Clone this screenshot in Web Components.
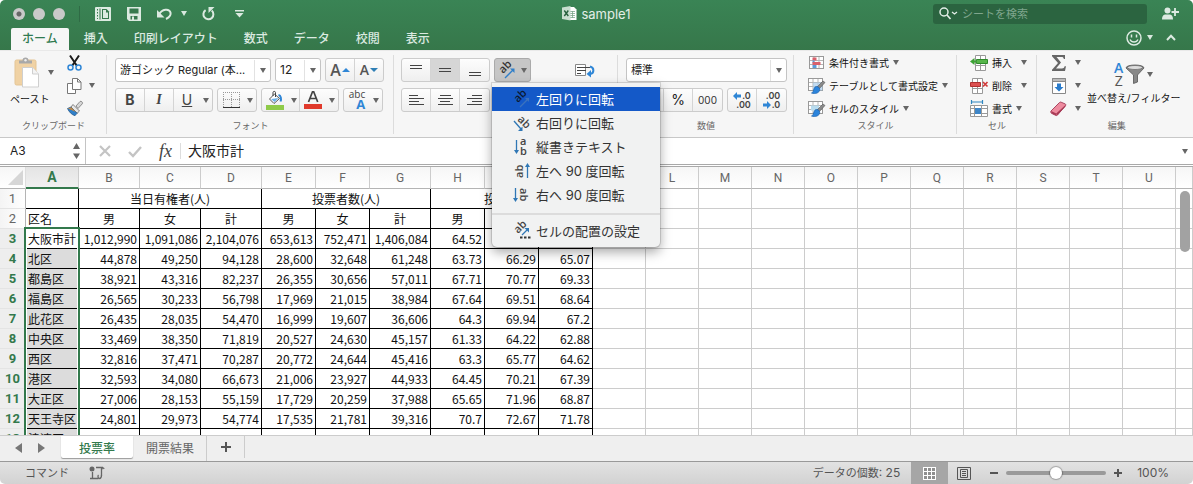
<!DOCTYPE html>
<html lang="ja">
<head>
<meta charset="utf-8">
<title>sample1</title>
<style>
  html, body { margin: 0; background: #fff; }
  body { font: 12px/16px Inter, "Noto Sans CJK JP", sans-serif; color: #222; }
</style>
</head>
<body>
<sheet-app></sheet-app>
<script>
const RESET = `*{box-sizing:border-box}button,input,select{font:inherit;color:inherit;margin:0;padding:0;border:0;background:none;outline:0}button{display:flex;align-items:center;justify-content:center}`;

/* Registers an element whose shadow root is cloned from a template. */
function define(name, css, html) {
  const tpl = document.createElement('template');
  tpl.innerHTML = `<style>${RESET}${css}</style>${html}`;
  customElements.define(name, class extends HTMLElement {
    constructor() {
      super();
      this.attachShadow({ mode: 'open' }).append(tpl.content.cloneNode(true));
    }
  });
}

const AB = (fill) => `<text x="0" y="0" font-family="Open Sans" font-size="11" font-weight="600" fill="${fill}">ab</text>`;
const SHEET = `<rect x=".5" y=".5" width="14" height="12" fill="#fff" stroke="#999"/><path d="M5 1v11M10 1v11M1 4.5h13M1 8.5h13" stroke="#b5b5b5" fill="none"/>`;
const BRUSH = `<path d="M15 3 8.500 9.500l2 2L17 4.500z" fill="#8a8a8a" stroke="#555" stroke-width=".6"/><path d="M8.500 8.500c2 0 3.400 1.400 3.200 3.300-.3 3-4.200 4.600-8.200 3.200 2.200-.8 1.700-2.600 2.500-4.200.5-1.400 1.300-2.300 2.500-2.300z" fill="#2b84dc" stroke="#1a62ad" stroke-width=".7"/>`;
const hl = (a) => a.map(([x1, y, x2]) => `<path d="M${x1} ${y}.5H${x2}" stroke="#444"/>`).join('');

const ICONS = {
  caret: [6, 5, `<path d="M0 0h6L3 5z" fill="#666"/>`],
  caretw: [6, 5, `<path d="M0 0h6L3 5z" fill="#d9e8df"/>`],
  layout: [16, 14, `<rect x="0" y="0" width="16" height="14" rx="1" fill="#dceae1"/><path d="M2.500 2v10" stroke="#37794e" stroke-dasharray="1.500 1.500"/><path d="M4.500 1.500h1v11h-1z" fill="#37794e"/><path d="M7 2h4.500L14 4.500V12H7z" fill="#37794e"/><path d="M8 3h3v2.500h2V11H8z" fill="#dceae1"/>`],
  save: [14, 14, `<path d="M0 0h14v14H2l-2-2z" fill="#dceae1"/><path d="M2.500 1.500h9v5h-9z M3.500 9h7v3.500h-7z" fill="#37794e"/><path d="M5 9.500h2V13H5z" fill="#dceae1"/>`],
  undo: [16, 12, `<path d="M2 6.500C5 1 12 0 13.500 4.500 14.500 8 11 10 9 11" fill="none" stroke="#dceae1" stroke-width="2"/><path d="M0 2v7.500h7.500z" fill="#dceae1"/>`],
  redo: [13, 14, `<path d="M3.600 3.200A5 5 0 1 0 9.700 3.600" fill="none" stroke="#dceae1" stroke-width="2"/><path d="M6.500 0h6l-6 6z" fill="#dceae1"/>`],
  custom: [9, 8, `<path d="M0 .8h9" stroke="#dceae1" stroke-width="1.500"/><path d="M.500 3h8L4.500 7.500z" fill="#dceae1"/>`],
  xls: [15, 15, `<path d="M6 1h6l2.500 2.500V14H6z" fill="#fff"/><path d="M8 5.500h5M8 7.500h5M8 9.500h5M8 11.500h5M10.500 5v7" stroke="#7ba68a" stroke-width=".8"/><path d="M0 1.500 8.500 0v14.500L0 13z" fill="#c9decf"/><path d="m2.300 4.500 4 5.500M6.300 4.500l-4 5.500" stroke="#26603c" stroke-width="1.400"/>`],
  search: [19, 13, `<circle cx="5" cy="5" r="4" fill="none" stroke="#e3eee7" stroke-width="1.500"/><path d="m8 8 3.500 4" stroke="#e3eee7" stroke-width="1.700"/><path d="m13 5 2.500 2L18 5" fill="none" stroke="#e3eee7" stroke-width="1.300"/>`],
  person: [18, 13, `<circle cx="5.500" cy="3.500" r="3" fill="#dceae1"/><path d="M0 12.500c0-4 2-5 3.500-5h4c1.500 0 3.500 1 3.500 5z" fill="#dceae1"/><path d="M13 1v8M9.500 5H17" stroke="#dceae1" stroke-width="1.800"/>`],
  smile: [16, 16, `<circle cx="8" cy="8" r="7" fill="none" stroke="#dceae1" stroke-width="1.500"/><path d="M5.500 4.500v3M10.500 4.500v3" stroke="#dceae1" stroke-width="1.500"/><path d="M4 9.500c1.500 3.300 6.500 3.300 8 0" fill="none" stroke="#dceae1" stroke-width="1.300"/>`],
  chev: [10, 7, `<path d="m1 6 4-4.200L9 6" fill="none" stroke="#dceae1" stroke-width="2"/>`],
  paste: [26, 31, `<rect x="1" y="3" width="21" height="25" rx="1.500" fill="#f0d2a4" stroke="#e4c595"/><path d="M5 6.500V3.500h3.500a3 3 0 0 1 6 0H18v3z" fill="#a9a9a9"/><circle cx="11.500" cy="3.200" r="1.200" fill="#eee"/><path d="M8.500 10.500h10l6 6.500v13h-16z" fill="#fff" stroke="#cfcfcf"/><path d="M18.500 10.500V17h6" fill="#f4f4f4" stroke="#cfcfcf"/>`],
  cut: [15, 16, `<path d="M3 .5 10 11M12 .5 5 11" stroke="#1c1c1c" stroke-width="2"/><circle cx="3.500" cy="12.500" r="2.500" fill="none" stroke="#2f86d6" stroke-width="1.500"/><circle cx="11.500" cy="12.500" r="2.500" fill="none" stroke="#2f86d6" stroke-width="1.500"/>`],
  copy: [15, 16, `<path d="M.5 5.500h8v10h-8z" fill="#fff" stroke="#777"/><path d="M5.500.5h5l3.500 3.500v7.500H5.500z" fill="#fff" stroke="#777"/><path d="M10.500.5V4H14" fill="none" stroke="#777"/>`],
  format: [16, 15, `<path d="m9 5 4-4.500c1-1 3.300 1 2.300 2.300L11 7.500z" fill="#d8d8d8" stroke="#777" stroke-width=".8"/><path d="m6 3.500 6.500 6.500-2.500 2.300L4 6z" fill="#e6e6e6" stroke="#666" stroke-width=".8"/><path d="m4 6 6 6.300L8 14.700C5 14 2 11 .5 7.500z" fill="#2f7fc9" stroke="#1d5184" stroke-width=".7"/><path d="m.8 7.500 3.500-1.300L9 11z" fill="#c08a4a"/>`],
  up: [8, 4, `<path d="M0 4h8L4 0z" fill="#2f86d6"/>`],
  down: [8, 4, `<path d="M0 0h8L4 4z" fill="#2f7fb5"/>`],
  border: [17, 18, `<path d="M.5 1v15M8.500 1v15M16.500 1v15M0 1.500h17M0 8.500h17" stroke="#999" stroke-dasharray="1 1" fill="none"/><path d="M0 16.500h17" stroke="#333"/>`],
  fill: [18, 19, `<path d="m8.500 3-5 5 4.500 4.500 5.500-5z" fill="#fff" stroke="#555"/><path d="m5 8 3.500 3 4-4z" fill="#6db1ea"/><path d="M7 5V1.500c0-1.500 2.500-1.500 2.500 0V6" fill="none" stroke="#444"/><path d="M12.500 4c2.500.5 3 4 2 6.500" fill="none" stroke="#2f86d6" stroke-width="2"/><rect x="0" y="14" width="18" height="5" fill="#8fcb49"/>`],
  color: [18, 18, `<path d="m4.500 11 4-10.200h1.200l4 10.200M6 7.500h6" fill="none" stroke="#444" stroke-width="1.700"/><rect x="0" y="13" width="18" height="5" fill="#e0392b"/>`],
  vtop: [14, 16, hl([[1, 3, 13], [1, 6, 13]])],
  vmid: [14, 16, hl([[1, 6, 13], [1, 9, 13]])],
  vbot: [14, 16, hl([[1, 10, 13], [1, 13, 13]])],
  left: [15, 12, hl([[0, 1, 9], [0, 4, 15], [0, 7, 10], [0, 10, 15]])],
  center: [15, 12, hl([[2, 1, 13], [0, 4, 15], [2, 7, 12], [0, 10, 15]])],
  right: [15, 12, hl([[5, 1, 15], [0, 4, 15], [5, 7, 15], [0, 10, 15]])],
  orient: [18, 18, `<g transform="translate(5 13) rotate(-45)">${AB('#333')}</g><path d="m7 17 8-8" stroke="#2f7fc9" stroke-width="1.300"/><path d="M16.500 7.500v4.500L12 7.500z" fill="#2f7fc9"/>`],
  rotl: [18, 18, `<g transform="translate(5 13) rotate(-45)">${AB('#0b1a33')}</g><path d="m7 17 8-8" stroke="#3b72bd" stroke-width="1.200"/><path d="M16 8v4l-4-4z" fill="#3b72bd"/>`],
  rotr: [18, 18, `<g transform="translate(4 6) rotate(45)">${AB('#444')}</g><path d="m1 7 7 8" stroke="#2f77b5" stroke-width="1.300"/><path d="M9.500 17H5l4.500-4.500z" fill="#2f77b5"/>`],
  vert: [18, 18, `<path d="M3.500 2v12" stroke="#2f77b5" stroke-width="1.300"/><path d="M1 12h5l-2.500 4z" fill="#2f77b5"/><g font-family="Open Sans" font-size="11" font-weight="600" fill="#444"><text x="7" y="7">a</text><text x="7" y="17">b</text></g>`],
  up90: [18, 18, `<g transform="translate(10 16) rotate(-90)">${AB('#444')}</g><path d="M14.500 4v12" stroke="#2f77b5" stroke-width="1.300"/><path d="M12 5h5l-2.500-4z" fill="#2f77b5"/>`],
  down90: [18, 18, `<path d="M2.500 2v12" stroke="#2f77b5" stroke-width="1.300"/><path d="M0 12h5l-2.500 4z" fill="#2f77b5"/><g transform="translate(7 2) rotate(90)">${AB('#444')}</g>`],
  cellset: [18, 18, `<g transform="translate(5 12) rotate(-45)">${AB('#444')}</g><path d="m9 13 5-5" stroke="#2f77b5" stroke-width="1.300"/><path d="M16 6v4.500L11.500 6z" fill="#2f77b5"/><path d="M7 15.500h2.500M11 15.500h2.500M15 15.500h2.500" stroke="#333" stroke-width="2.200"/>`],
  wrap: [20, 15, `<path d="M.5 1.500h10v11H.5z" fill="#fff" stroke="#888"/><path d="M2 4.500h13M2 7.500h9M2 10.500h4" stroke="#444"/><path d="M15 3.500c4.500 1 4.500 7 0 7.500" fill="none" stroke="#2f86d6" stroke-width="2"/><path d="M16 7v7.500L11.500 11z" fill="#2f86d6"/>`],
  arrl: [8, 8, `<path d="M4 0v2.500h4v3H4V8L0 4z" fill="#2f86d6"/>`],
  arrr: [8, 8, `<path d="M4 0v2.500H0v3h4V8l4-4z" fill="#2f86d6"/>`],
  cond: [15, 13, `${SHEET}<path d="M3.500 1.500h4v3h-4z" fill="#d9616c"/><path d="M3.500 4.500h2v3h-2z" fill="#5c9bd8"/><path d="M3.500 6h8v3h-8z" fill="#d9616c"/><path d="M3.500 9h4v3h-4z" fill="#5c9bd8"/>`],
  tbl: [17, 16, `${SHEET}<path d="M5 4.500h9.500v8H5z" fill="#a9cdeb" opacity=".7"/>${BRUSH}`],
  style: [17, 16, `${SHEET}<path d="M3 4.500h8v5H3z" fill="#b9dcef"/>${BRUSH}`],
  ins: [18, 16, `<path d="M5.500.5h10v15h-10zM10.500.5v15M5.500 10.500h10" fill="#fff" stroke="#999"/><path d="M6.500 4.500h11v4h-11z" fill="#57b54b" stroke="#2e8a2a"/><path d="M4.500 3v7L0 6.500z" fill="#3da235"/><path d="M4 5.500h3v2H4z" fill="#3da235"/>`],
  del: [18, 16, `<path d="M2.500.5h10v15h-10zM7.500.5v15M2.500 10.500h10" fill="#fff" stroke="#999"/><path d="M.5 4.500h10v4H.5z" fill="#dc5050" stroke="#b03030"/><path d="m13 4 4.500 4.500M17.500 4 13 8.500" stroke="#d03a3a" stroke-width="1.700"/>`],
  fmt: [18, 17, `<path d="M1.500 0v4M12.500 0v4M2 2h10" stroke="#2f86c0" stroke-width="1.200"/><path d="M.5 5.500h17v11H.5zM1 8.500h16M1 13.500h16M4.500 6v10M11.500 6v10" fill="#fff" stroke="#999"/><path d="M5 8h6v6H5z" fill="#3e86c8"/>`],
  sigma: [14, 16, `<path d="M0 0h13v4h-1.200C11.500 2.500 11 2 9.500 2H4.500L9 7.500 4 13.500h6c1.500 0 2.200-.5 2.600-2.200H14L13 16H0v-1.200L6 8 0 1.300z" fill="#666"/>`],
  filld: [14, 16, `<path d="M.5.5h13v15H.5z" fill="#fff" stroke="#888"/><path d="M.5.5h13v3H.5z" fill="#bbb" stroke="#888"/><path d="M5 5.500h4v3.500h2.500L7 13.500 2.500 9H5z" fill="#2a7bcb"/>`],
  erase: [17, 16, `<path d="M1 10 9.500 1.500c.5-.5 1-.6 1.600-.3l4 1.700c.8.4 1 1 .4 1.700L7.500 14c-.5.600-1 .7-1.700.4L1.500 12.300C.7 11.800.4 10.700 1 10z" fill="#ee8b9f" stroke="#a94560"/><path d="m1.200 10 5 2.500v2L1.500 12.300z M6.200 12.500 15.500 4v1.500L7 14.500z" fill="#a83a55"/>`],
  filter: [20, 20, `<path d="M1 4c0-4 18-4 18 0l-6.500 7v7l-4 1.500V11z" fill="#888" stroke="#555" stroke-width=".8"/><ellipse cx="10" cy="3.500" rx="7.500" ry="2" fill="#ddd" stroke="#666" stroke-width=".7"/>`],
  spin: [7, 16, `<path d="M0 6h7L3.500 0zM0 10.500h7l-3.500 5.500z" fill="#666"/>`],
  cancel: [12, 12, `<path d="m1 1 10 10M11 1 1 11" stroke="#c4c4c4" stroke-width="2.200"/>`],
  ok: [14, 11, `<path d="m1 6 4 4 8-9" fill="none" stroke="#c4c4c4" stroke-width="2.400"/>`],
  prev: [7, 10, `<path d="M7 0v10L0 5z" fill="#777"/>`],
  next: [7, 10, `<path d="M0 0v10l7-5z" fill="#777"/>`],
  plus: [10, 10, `<path d="M5 0v10M0 5h10" stroke="#555" stroke-width="2"/>`],
  sminus: [8, 8, `<path d="M0 4h8" stroke="#555" stroke-width="2"/>`],
  splus: [8, 8, `<path d="M4 0v8M0 4h8" stroke="#555" stroke-width="2"/>`],
  script: [16, 14, `<circle cx="3" cy="3" r="2.500" fill="#666"/><path d="M7 1.500h7M12.500 1.500v8M3.500 6v6.500M1 12.500h8.500" stroke="#666" stroke-width="1.300" fill="none"/><path d="M9.500 9c-1 1-.5 3.500 1 3.500s2-1.500 2-3.500M12.500 4c0-2 2-3 2.500-1" fill="none" stroke="#666" stroke-width="1.300"/>`],
  gridv: [13, 13, `<path d="M0 0h13v13H0z" fill="#fff"/><path d="M1 1h3v3H1zM5 1h3v3H5zM9 1h3v3H9zM1 5h3v3H1zM5 5h3v3H5zM9 5h3v3H9zM1 9h3v3H1zM5 9h3v3H5zM9 9h3v3H9z" fill="#8f8f8f"/>`],
  pagev: [14, 13, `<path d="M.5.5h13v12H.5zM3.500 2.500h7v8h-7z" fill="none" stroke="#555"/><path d="M5 4.500h4M5 6.500h4M5 8.500h4" stroke="#555"/>`]
};

customElements.define('app-icon', class extends HTMLElement {
  constructor() { super(); this.attachShadow({ mode: 'open' }); }
  connectedCallback() {
    const [w, h, body] = ICONS[this.getAttribute('name')];
    this.shadowRoot.innerHTML = `<style>:host{display:inline-block;flex:none;line-height:0}svg{display:block;overflow:visible}</style><svg width="${w}" height="${h}" viewBox="0 0 ${w} ${h}" aria-hidden="true">${body}</svg>`;
  }
});

const icon = (n) => `<app-icon name="${n}"></app-icon>`;

define('title-bar', `
  :host{display:grid;grid-template-columns:1fr auto 1fr;align-items:center;height:27px;color:#e3eee7}
  .left,.right,.mid{display:flex;align-items:center}
  .light{width:12px;height:12px;border-radius:50%;background:#c9c9c9;margin-right:8px}
  .light.dirty{background:radial-gradient(circle,#666 0 2px,#c9c9c9 3px)}
  .left{padding-left:13px}
  .rule{width:1px;height:16px;background:#2f6b45;margin:0 15px 0 6px}
  .left button{margin-right:16px}
  .left .undo{margin-right:8px}
  .left .more{margin-right:15px}
  .left .redo{margin-right:20px}
  .mid{gap:4px;font-size:13px}
  .right{justify-content:flex-end;padding-right:13px;gap:15px}
  .search{display:flex;align-items:center;gap:4px;width:214px;height:20px;border-radius:3px;background:#2b6440;padding:0 6px;border:0}
  .search input{flex:1;min-width:0;font-size:11px}
  .search input::placeholder{color:#7fa68d;opacity:1}
`, `
  <div class="left">
    <span class="light dirty"></span><span class="light"></span><span class="light"></span><span class="rule"></span>
    <button aria-label="サイドバー">${icon('layout')}</button>
    <button aria-label="保存">${icon('save')}</button>
    <button class="undo" aria-label="元に戻す">${icon('undo')}</button>
    <button class="more" aria-label="履歴">${icon('caretw')}</button>
    <button class="redo" aria-label="繰り返し">${icon('redo')}</button>
    <button aria-label="カスタマイズ">${icon('custom')}</button>
  </div>
  <div class="mid">${icon('xls')}<span>sample1</span></div>
  <div class="right">
    <label class="search">${icon('search')}<input type="search" aria-label="検索" placeholder="シートを検索"></label>
    <button aria-label="共有">${icon('person')}</button>
  </div>`);

define('ribbon-tabs', `
  :host{display:flex;align-items:flex-end;justify-content:space-between;height:23px;color:#dceae1}
  nav{display:flex;gap:4px;padding-left:11px}
  a{display:block;height:22px;padding:0 11px;line-height:21px;color:inherit;text-decoration:none;font-weight:500}
  a.on{background:#f6f6f6;color:#2f7a50;border-radius:2px 2px 0 0}
  div{display:flex;align-items:center;height:23px;padding:0 17px 2px 0;gap:5px}
  .fold{margin-left:8px}
`, `
  <nav><a class="on" href="#home">ホーム</a><a href="#insert">挿入</a><a href="#layout">印刷レイアウト</a><a href="#formula">数式</a><a href="#data">データ</a><a href="#review">校閲</a><a href="#view">表示</a></nav>
  <div><button aria-label="フィードバック">${icon('smile')}</button>${icon('caretw')}<button class="fold" aria-label="リボンを閉じる">${icon('chev')}</button></div>`);

customElements.define('ribbon-group', class extends HTMLElement {
  constructor() { super(); this.attachShadow({ mode: 'open' }); }
  connectedCallback() {
    this.shadowRoot.innerHTML = `<style>
      :host{display:flex;flex-direction:column;background:linear-gradient(#dcdcdc,#dcdcdc) right 4px/1px 79px no-repeat}
      :host(:last-of-type){background:none}
      .body{flex:1;min-height:0}
      .label{font-size:9px;line-height:12px;color:#666;text-align:center;padding-bottom:5px}
    </style><div class="body"><slot></slot></div><div class="label">${this.getAttribute('label')}</div>`;
  }
});

define('rotate-menu', `
  :host{display:block;width:168px;background:#f1f2f2;border-radius:0 0 5px 5px;box-shadow:0 0 0 1px rgba(0,0,0,.12),0 5px 12px rgba(0,0,0,.35);padding:4px 0;font-size:13px;color:#333}
  button{width:100%;height:24px;justify-content:flex-start;gap:5px;padding-left:21px;white-space:nowrap}
  button.on{background:#1459c8;color:#fff}
  hr{margin:6px 0 4px;border:0;height:2px;background:#dcdcdc}
`, `
  <button class="on">${icon('rotl')}左回りに回転</button>
  <button>${icon('rotr')}右回りに回転</button>
  <button>${icon('vert')}縦書きテキスト</button>
  <button>${icon('up90')}左へ 90 度回転</button>
  <button>${icon('down90')}右へ 90 度回転</button>
  <hr>
  <button>${icon('cellset')}セルの配置の設定</button>`);

define('ribbon-bar', `
  :host{display:grid;grid-template-columns:107px 287px 224px 176px 163px 80px 1fr;height:88px;background:#f6f6f6;border-bottom:1px solid #c8c8c8;border-top:1px solid #e9e9e9;font-size:11px}
  .rows{display:grid;gap:6px;padding:7px 8px 0}
  .align{padding-left:7px}
  .row{display:flex;gap:4px;height:24px}
  .spread{justify-content:space-between}
  .seg{display:flex;border:1px solid #ccc;border-radius:3px;background:linear-gradient(#fdfdfd,#efefef)}
  .seg button{border-right:1px solid #d4d4d4;width:29px}
  .seg button:last-child{border-right:0}
  .seg .n{border-right:0;width:26px}
  .seg .c{width:12px}
  .seg .on{background:#d6d6d6}
  .box{display:grid;align-items:center;border:1px solid #c4c4c4;border-radius:3px;background:#fff}
  .box>*{grid-area:1/1}
  .box app-icon{justify-self:end;padding:8px 4px 8px 5px;border-left:1px solid #e2e2e2;pointer-events:none}
  select{appearance:none;width:100%;height:22px;padding-left:4px;line-height:22px}
  .b{font-size:14px;color:#444}
  .seg .tall{font-size:16px;font-family:"Open Sans";font-weight:600;color:#555;gap:1px}
  .seg .tall.small{font-size:14px;width:28px}
  .ori{position:relative}
  .ori>button{width:37px;height:24px;border:1px solid #aaa;border-radius:3px;background:#c6c6c6;gap:5px}
  rotate-menu{position:absolute;left:-2px;top:25px}
  .wrap{margin-left:40px}
  .clip{display:grid;grid-template-columns:66px 1fr;padding:3px 0 0 0}
  .paste{display:grid;grid-template-columns:26px 6px;gap:3px 8px;justify-content:start;align-content:start;align-items:center;padding:3px 0 0 14px;font-size:10px;line-height:16px}
  .paste span{grid-column:1/3;text-align:center;margin:0 9px 0 -4px;white-space:nowrap;color:#111}
  .list{display:grid;grid-auto-rows:23px;justify-items:start;align-items:center;padding-left:14px;font-size:10px;white-space:nowrap;color:#111}
  .list button{gap:4px;height:23px}
  .clip .list{padding:0;gap:0;margin-top:-3px}
  .clip .list button{gap:6px}
  .list app-icon:first-child{display:flex;justify-content:center;min-width:17px}
  .edit{display:grid;grid-template-columns:50px 1fr}
  .edit .list button{gap:8px}
  .sort{display:grid;justify-items:center;align-content:start;padding:9px 16px 0 0;font-size:10px;row-gap:2px;white-space:nowrap;color:#111}
  .sort div{display:flex;align-items:center;gap:2px;height:28px}
  .az{display:grid;font:14px/13px "Open Sans";color:#555}
  .az b{font-weight:600;color:#2f86d6}
  .pc{font-size:14px}
  .k{font-size:10px;color:#333}
  .dec{display:grid;font:9px/9px Inter;color:#444;font-weight:600;text-align:right;justify-items:end}
  .dec span{display:flex;align-items:center;gap:1px}
  .abc{display:grid;font:10px/9px "Open Sans";color:#444}
  .abc b{font-size:13px;line-height:11px;color:#2f86d6;text-align:right}
`, `
  <ribbon-group label="クリップボード">
    <div class="clip">
      <button class="paste">${icon('paste')}${icon('caret')}<span>ペースト</span></button>
      <div class="list"><button aria-label="切り取り">${icon('cut')}</button><button aria-label="コピー">${icon('copy')}${icon('caret')}</button><button aria-label="書式のコピー">${icon('format')}</button></div>
    </div>
  </ribbon-group>
  <ribbon-group label="フォント">
    <div class="rows">
      <div class="row">
        <div class="box" style="width:156px"><select aria-label="フォント"><option>游ゴシック Regular (本...</option></select>${icon('caret')}</div>
        <div class="box" style="width:46px"><select aria-label="サイズ" style="font-size:12px"><option>12</option></select>${icon('caret')}</div>
        <div class="seg"><button class="tall" aria-label="拡大">A${icon('up')}</button><button class="tall small" aria-label="縮小">A${icon('down')}</button></div>
      </div>
      <div class="row">
        <div class="seg"><button class="b"><b>B</b></button><button class="b" style="font-family:'Liberation Serif'"><b><i>I</i></b></button><button class="b n"><u>U</u></button><button class="c" aria-label="下線">${icon('caret')}</button></div>
        <div class="seg"><button class="n" aria-label="罫線">${icon('border')}</button><button class="c" aria-label="罫線の種類">${icon('caret')}</button></div>
        <div class="seg"><button class="n" aria-label="塗りつぶし">${icon('fill')}</button><button class="c" aria-label="塗りつぶしの色">${icon('caret')}</button><button class="n" aria-label="文字色">${icon('color')}</button><button class="c" aria-label="文字色の選択">${icon('caret')}</button></div>
        <div class="seg"><button class="n"><span class="abc">abc<b>A</b></span></button><button class="c" aria-label="ふりがな">${icon('caret')}</button></div>
      </div>
    </div>
  </ribbon-group>
  <ribbon-group label="配置">
    <div class="rows align">
      <div class="row">
        <div class="seg"><button aria-label="上揃え">${icon('vtop')}</button><button class="on" aria-label="上下中央">${icon('vmid')}</button><button aria-label="下揃え">${icon('vbot')}</button></div>
        <div class="ori"><button aria-label="方向">${icon('orient')}${icon('caret')}</button><rotate-menu></rotate-menu></div>
        <button class="wrap" aria-label="折り返し">${icon('wrap')}</button>
      </div>
      <div class="row"><div class="seg"><button aria-label="左揃え">${icon('left')}</button><button aria-label="中央揃え">${icon('center')}</button><button aria-label="右揃え">${icon('right')}</button></div></div>
    </div>
  </ribbon-group>
  <ribbon-group label="数値">
    <div class="rows">
      <div class="row"><div class="box" style="flex:1"><select aria-label="表示形式"><option>標準</option></select>${icon('caret')}</div></div>
      <div class="row spread">
        <div class="seg"><button style="width:37px" aria-label="通貨">${icon('caret')}</button><button class="pc">%</button><button class="k">000</button></div>
        <div class="seg"><button><span class="dec"><span>${icon('arrl')}.0</span>.00</span></button><button><span class="dec">.00<span>${icon('arrr')}.0</span></span></button></div>
      </div>
    </div>
  </ribbon-group>
  <ribbon-group label="スタイル">
    <div class="list"><button>${icon('cond')}条件付き書式${icon('caret')}</button><button>${icon('tbl')}テーブルとして書式設定${icon('caret')}</button><button>${icon('style')}セルのスタイル${icon('caret')}</button></div>
  </ribbon-group>
  <ribbon-group label="セル">
    <div class="list" style="padding-left:13px"><button>${icon('ins')}挿入&ensp;${icon('caret')}</button><button>${icon('del')}削除&ensp;${icon('caret')}</button><button>${icon('fmt')}書式${icon('caret')}</button></div>
  </ribbon-group>
  <ribbon-group label="編集">
    <div class="edit">
      <div class="list" style="padding-left:13px"><button aria-label="合計">${icon('sigma')}${icon('caret')}</button><button aria-label="フィル">${icon('filld')}${icon('caret')}</button><button aria-label="クリア">${icon('erase')}${icon('caret')}</button></div>
      <button class="sort"><div><span class="az"><b>A</b><span>Z</span></span>${icon('filter')}${icon('caret')}</div>並べ替え/フィルター</button>
    </div>
  </ribbon-group>`);

define('formula-bar', `
  :host{display:flex;align-items:center;height:29px;background:#fff;border-bottom:1px solid #a9a9a9}
  .in{display:flex;align-items:center;flex:1;height:27px;margin-bottom:1px;border-bottom:1px solid #a9a9a9}
  .name{display:flex;align-items:center;width:86px;height:26px;padding:0 5px 0 10px;border-right:1px solid #c4c4c4}
  .name input{flex:1;min-width:0}
  .tools{display:flex;align-items:center;gap:17px;padding-left:13px}
  .fx{font:italic 18px/20px "Liberation Serif";color:#444}
  .value{flex:1;min-width:0;margin-left:8px;padding-left:7px;border-left:1px solid #ddd;height:16px;font-size:14px}
  .in>app-icon{margin-right:5px}
`, `
  <div class="in">
    <div class="name"><input aria-label="名前ボックス" value="A3">${icon('spin')}</div>
    <div class="tools"><button aria-label="キャンセル">${icon('cancel')}</button><button aria-label="確定">${icon('ok')}</button><button class="fx">fx</button></div>
    <input class="value" aria-label="数式" value="大阪市計">
    ${icon('caret')}
  </div>`);

const ROWS = [
  ['大阪市計','1,012,990','1,091,086','2,104,076','653,613','752,471','1,406,084','64.52','68.97','66.83'],
  ['北区','44,878','49,250','94,128','28,600','32,648','61,248','63.73','66.29','65.07'],
  ['都島区','38,921','43,316','82,237','26,355','30,656','57,011','67.71','70.77','69.33'],
  ['福島区','26,565','30,233','56,798','17,969','21,015','38,984','67.64','69.51','68.64'],
  ['此花区','26,435','28,035','54,470','16,999','19,607','36,606','64.3','69.94','67.2'],
  ['中央区','33,469','38,350','71,819','20,527','24,630','45,157','61.33','64.22','62.88'],
  ['西区','32,816','37,471','70,287','20,772','24,644','45,416','63.3','65.77','64.62'],
  ['港区','32,593','34,080','66,673','21,006','23,927','44,933','64.45','70.21','67.39'],
  ['大正区','27,006','28,153','55,159','17,729','20,259','37,988','65.65','71.96','68.87'],
  ['天王寺区','24,801','29,973','54,774','17,535','21,781','39,316','70.7','72.67','71.78'],
  ['浪速区','25,890','23,010','48,900','13,296','12,684','25,980','51.31','54.56','53.03']
];

customElements.define('sheet-grid', class extends HTMLElement {
  constructor() {
    super();
    const letters = [...'ABCDEFGHIJKLMNOPQRSTU'];
    const widths = [26, 53, 61, 61, 61, 54, 54, 61, 54, 54, 54, ...Array(11).fill(53)];
    const blanks = '<td></td>'.repeat(12);
    const body = ROWS.map((r, i) => {
      const first = i ? `<td class="d a pick">${r[0]}</td>` : `<td class="d a first">${r[0]}<span class="sel"></span></td>`;
      return `<tr><th class="on" scope="row">${i + 3}</th>${first}${r.slice(1).map(v => `<td class="d">${v}</td>`).join('')}${blanks}</tr>`;
    }).join('');
    this.attachShadow({ mode: 'open' }).innerHTML = `<style>${RESET}
      :host{display:block;position:relative;overflow:hidden;background:#fff;font-family:"Noto Sans CJK JP",sans-serif}
      table{table-layout:fixed;width:100%;border-collapse:separate;border-spacing:0}
      th,td{height:20px;padding:0 2px;line-height:18px;font-weight:400;white-space:nowrap;border:solid #ccc;border-width:0 1px 1px 0}
      thead th{height:22px;line-height:20px;font-family:Roboto;color:#666;background:linear-gradient(#f6f6f6,#fff);border-bottom-color:#b4b4b4}
      thead .on{border-bottom:2px solid #33794c;font-size:14px;background:linear-gradient(#e4e4e4,#f0f0f0)}
      tbody th{font-family:Roboto;color:#666;font-size:13px;padding:0;text-align:center;background:linear-gradient(90deg,#f4f4f4,#fff);border-right-color:#b4b4b4;border-bottom-color:#e4e4e4}
      .on{color:#33794c!important;font-weight:700}
      tbody th.on{background:#eee}
      thead .corner{text-align:right;padding:0 2px;line-height:15px;border-right-color:#ddd}
      .corner i{display:inline-block;border:solid transparent;border-width:0 0 15px 15px;border-bottom-color:#d6d6d6;vertical-align:bottom}
      .d{border-color:#000;text-align:right;color:#111}
      .a{text-align:left}
      .h{text-align:center}
      .pick{background:#dcdcdc}
      .first{position:relative}
      .sel{position:absolute;left:-2px;top:-2px;width:56px;height:900px;border:2px solid #33794c;box-shadow:inset 0 0 0 1px #fff;pointer-events:none}
      .thumb{position:absolute;right:3px;top:24px;width:10px;height:61px;border-radius:5px;background:#a2a2a2}
    </style>
    <table>
      <colgroup>${widths.map(w => `<col style="width:${w}px">`).join('')}<col></colgroup>
      <thead><tr><th class="corner"><i></i></th>${letters.map((l, i) => `<th scope="col"${i ? '' : ' class="on"'}>${l}</th>`).join('')}<th></th></tr></thead>
      <tbody>
        <tr><th scope="row">1</th><td class="d"></td><td class="d h" colspan="3">当日有権者(人)</td><td class="d h" colspan="3">投票者数(人)</td><td class="d h" colspan="3">投票率(%)</td>${blanks}</tr>
        <tr><th scope="row">2</th><td class="d a">区名</td>${['男','女','計','男','女','計','男','女','計'].map(v => `<td class="d h">${v}</td>`).join('')}${blanks}</tr>
        ${body}
      </tbody>
    </table>
    <span class="thumb"></span>`;
  }
});

define('sheet-tabs', `
  :host{display:flex;align-items:flex-start;height:26px;background:#efefef;border-top:1px solid #ccc;color:#666}
  .nav{display:flex;gap:16px;padding:7px 16px 0 15px}
  a{display:block;height:25px;line-height:25px;padding:0 12px 0 13px;color:inherit;text-decoration:none;border-right:1px solid #ccc}
  a.on{height:22px;padding:0 18px;color:#33794c;background:#fff;border:0;font-weight:500;border-radius:0 0 2px 2px;box-shadow:0 1px 1px #999}
  .add{width:38px;height:22px;border-right:1px solid #ccc}
`, `
  <div class="nav"><button aria-label="前のシート">${icon('prev')}</button><button aria-label="次のシート">${icon('next')}</button></div>
  <a class="on" href="#s1">投票率</a><a href="#s2">開票結果</a><button class="add" aria-label="シートを追加">${icon('plus')}</button>`);

define('status-bar', `
  :host{display:flex;align-items:center;height:23px;border-top:1px solid #999;background:linear-gradient(#e2e2e2,#d2d2d2);color:#555;font-size:11px}
  .cmd{padding:0 20px 0 25px}
  .count{margin-left:auto;padding-right:11px}
  .count b{font-weight:400;font-size:12px}
  .view{width:37px;height:22px}
  .view.on{background:#a6a6a6}
  .view+.view{width:32px;margin-right:10px}
  input{appearance:none;width:100px;height:12px;margin:0 8px}
  input::-webkit-slider-runnable-track{height:4px;border-radius:2px;background:#9a9a9a}
  input::-webkit-slider-thumb{appearance:none;width:12px;height:12px;margin-top:-4px;border-radius:50%;background:#fff;box-shadow:0 0 1px 1px rgba(0,0,0,.25)}
  .pct{padding:0 24px 0 15px;font-size:12px}
`, `
  <span class="cmd">コマンド</span><button aria-label="マクロ">${icon('script')}</button>
  <span class="count">データの個数<b>: 25</b></span>
  <button class="view on" aria-label="標準表示">${icon('gridv')}</button><button class="view" aria-label="ページ表示">${icon('pagev')}</button>
  <button aria-label="縮小">${icon('sminus')}</button><input type="range" min="0" max="100" value="50" aria-label="ズーム"><button aria-label="拡大">${icon('splus')}</button>
  <span class="pct">100%</span>`);

define('sheet-app', `
  :host{display:flex;flex-direction:column;height:100vh;border-radius:5px;overflow:hidden}
  header{flex:none;background:linear-gradient(#3a8455,#36774a)}
  ribbon-bar,formula-bar,sheet-tabs,status-bar{flex:none}
  ribbon-bar{position:relative;z-index:2}
  sheet-grid{flex:1;min-height:0}
`, `
  <header><title-bar></title-bar><ribbon-tabs></ribbon-tabs></header>
  <ribbon-bar></ribbon-bar>
  <formula-bar></formula-bar>
  <sheet-grid></sheet-grid>
  <sheet-tabs></sheet-tabs>
  <status-bar></status-bar>`);
</script>
</body>
</html>
